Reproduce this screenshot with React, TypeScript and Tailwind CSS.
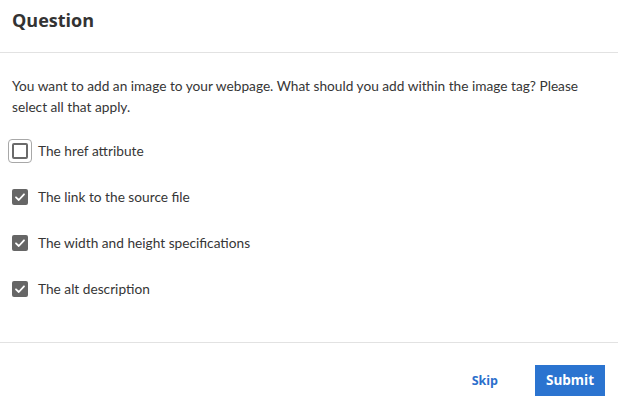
import React from "react";

function Check({ checked }: { checked: boolean }) {
  if (!checked) {
    return (
      <span className="flex h-[24px] w-[24px] items-center justify-center rounded-[4px] border border-[#a8a8a8] -ml-[4px] -mr-[4px]">
        <span className="block h-[16px] w-[16px] rounded-[2px] border-2 border-[#6a6a6a] bg-white" />
      </span>
    );
  }
  return (
    <span className="flex h-[16px] w-[16px] items-center justify-center rounded-[2px] bg-[#666666]">
      <svg width="12" height="12" viewBox="0 0 12 12" fill="none">
        <path d="M2 6.3 L4.8 9 L10 3.3" stroke="white" strokeWidth="1.8" strokeLinecap="round" strokeLinejoin="round" />
      </svg>
    </span>
  );
}

const options = [
  { label: "The href attribute", checked: false },
  { label: "The link to the source file", checked: true },
  { label: "The width and height specifications", checked: true },
  { label: "The alt description", checked: true },
];

export default function App() {
  return (
    <div className="h-[411px] w-[618px] bg-white text-[#363636]" style={{ fontFamily: "Lato, 'Open Sans', sans-serif" }}>
      <div className="h-[53px] border-b border-[#e2e2e2] px-3 pt-[7px]">
        <h1 className="text-[18px] font-bold leading-[26px] text-[#333333]" style={{ fontFamily: "'Open Sans', sans-serif" }}>
          Question
        </h1>
      </div>
      <div className="h-[290px] border-b border-[#e2e2e2] px-3 pt-[22px]">
        <p className="text-[13.7px] leading-[21px]">
          You want to add an image to your webpage. What should you add within the image tag? Please select all that apply.
        </p>
        <div className="mt-[11px] flex flex-col">
          {options.map((o) => (
            <div key={o.label} className="flex h-[46px] items-center gap-[10px]">
              <Check checked={o.checked} />
              <span className="text-[13.7px]">{o.label}</span>
            </div>
          ))}
        </div>
      </div>
      <div className="flex items-start justify-end pr-[13px] pt-[22px]">
        <button className="mr-[37px] mt-[7px] text-[12.5px] font-bold text-[#2b6fcc]" style={{ fontFamily: "'Open Sans', sans-serif" }}>
          Skip
        </button>
        <button className="h-[31px] w-[70px] bg-[#2b74d0] text-[13.5px] font-bold text-white" style={{ fontFamily: "'Open Sans', sans-serif" }}>
          Submit
        </button>
      </div>
    </div>
  );
}
